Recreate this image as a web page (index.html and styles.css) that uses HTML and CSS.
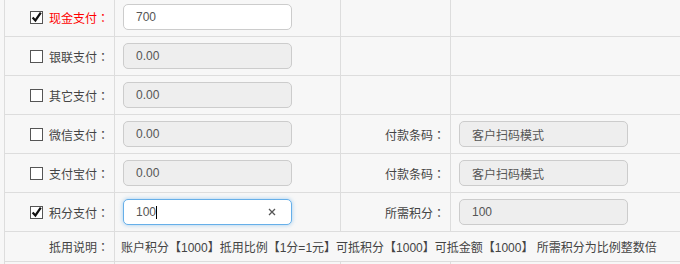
FILE: index.html
```html
<!DOCTYPE html>
<html>
<head>
<meta charset="utf-8">
<link rel="stylesheet" href="styles.css">
</head>
<body>
<div class="form">
  <div class="cell label"><span class="check on"><svg viewBox="0 0 13 13" width="13" height="13"><rect x="0.5" y="0.5" width="12" height="12" fill="#fff" stroke="#555"/><path d="M2.6 6.4 L5.4 9.4 L10.8 1.6" fill="none" stroke="#111" stroke-width="2.2"/></svg></span><span class="red">现金支付<span class="colon">：</span></span></div>
  <div class="cell"><div class="field">700</div></div>
  <div class="cell"></div>
  <div class="cell last"></div>

  <div class="cell label"><span class="check"><svg viewBox="0 0 13 13" width="13" height="13"><rect x="0.5" y="0.5" width="12" height="12" fill="#fff" stroke="#555"/></svg></span><span>银联支付<span class="colon">：</span></span></div>
  <div class="cell"><div class="field off">0.00</div></div>
  <div class="cell"></div>
  <div class="cell last"></div>

  <div class="cell label"><span class="check"><svg viewBox="0 0 13 13" width="13" height="13"><rect x="0.5" y="0.5" width="12" height="12" fill="#fff" stroke="#555"/></svg></span><span>其它支付<span class="colon">：</span></span></div>
  <div class="cell"><div class="field off">0.00</div></div>
  <div class="cell"></div>
  <div class="cell last"></div>

  <div class="cell label"><span class="check"><svg viewBox="0 0 13 13" width="13" height="13"><rect x="0.5" y="0.5" width="12" height="12" fill="#fff" stroke="#555"/></svg></span><span>微信支付<span class="colon">：</span></span></div>
  <div class="cell"><div class="field off">0.00</div></div>
  <div class="cell label">付款条码<span class="colon">：</span></div>
  <div class="cell last"><div class="field off cn">客户扫码模式</div></div>

  <div class="cell label"><span class="check"><svg viewBox="0 0 13 13" width="13" height="13"><rect x="0.5" y="0.5" width="12" height="12" fill="#fff" stroke="#555"/></svg></span><span>支付宝付<span class="colon">：</span></span></div>
  <div class="cell"><div class="field off">0.00</div></div>
  <div class="cell label">付款条码<span class="colon">：</span></div>
  <div class="cell last"><div class="field off cn">客户扫码模式</div></div>

  <div class="cell label"><span class="check on"><svg viewBox="0 0 13 13" width="13" height="13"><rect x="0.5" y="0.5" width="12" height="12" fill="#fff" stroke="#555"/><path d="M2.6 6.4 L5.4 9.4 L10.8 1.6" fill="none" stroke="#111" stroke-width="2.2"/></svg></span><span>积分支付<span class="colon">：</span></span></div>
  <div class="cell"><div class="field focus"><span class="val">100</span><span class="caret"></span><span class="clear"><svg viewBox="0 0 8 8" width="8" height="8"><path d="M1 1 L7 7 M7 1 L1 7" stroke="#555" stroke-width="1.3"/></svg></span></div></div>
  <div class="cell label">所需积分<span class="colon">：</span></div>
  <div class="cell last"><div class="field off">100</div></div>

  <div class="cell label short">抵用说明<span class="colon">：</span></div>
  <div class="cell note short">账户积分【1000】抵用比例【1分=1元】可抵积分【1000】可抵金额【1000】 所需积分为比例整数倍</div>

  <div class="cell"></div>
  <div class="cell"></div>
  <div class="cell"></div>
  <div class="cell last"></div>
</div>
</body>
</html>
```

FILE: styles.css
```css
html, body {
  margin: 0;
  padding: 0;
  background: #f7f7f7;
  overflow: hidden;
}
.form {
  margin-left: 4px;
  margin-top: -2px;
  width: 700px;
  border-left: 1px solid #ddd;
  display: grid;
  grid-template-columns: 110px 226px 110px 1fr;
  font-family: "Liberation Sans", "Noto Sans CJK SC", sans-serif;
  font-size: 12px;
  color: #444;
}
.cell {
  box-sizing: border-box;
  height: 39px;
  border-right: 1px solid #ddd;
  border-bottom: 1px solid #ddd;
  display: flex;
  align-items: center;
  padding-left: 8px;
  white-space: nowrap;
}
.cell.last {
  border-right: none;
}
.cell.label {
  justify-content: flex-end;
  padding-left: 0;
  padding-right: 5px;
}
.cell.short {
  height: 30px;
}
.cell.note {
  grid-column: 2 / 5;
  border-right: none;
  padding-left: 6px;
}
.colon {
  font-family: "Noto Sans CJK TC", sans-serif;
}
.check {
  display: flex;
  margin-right: 6px;
}
.red {
  color: #f00;
}
.field {
  box-sizing: border-box;
  width: 169px;
  height: 26px;
  border: 1px solid #ccc;
  border-radius: 5px;
  background: #fff;
  padding: 0 12px;
  display: flex;
  align-items: center;
  color: #555;
}
.field.off {
  background: #eee;
}
.field.focus {
  border-color: #66afe9;
  box-shadow: 0 0 4px rgba(102, 175, 233, 0.6);
}
.caret {
  width: 1px;
  height: 13px;
  background: #000;
}
.clear {
  display: flex;
  margin-left: auto;
  margin-right: 3px;
}
```
